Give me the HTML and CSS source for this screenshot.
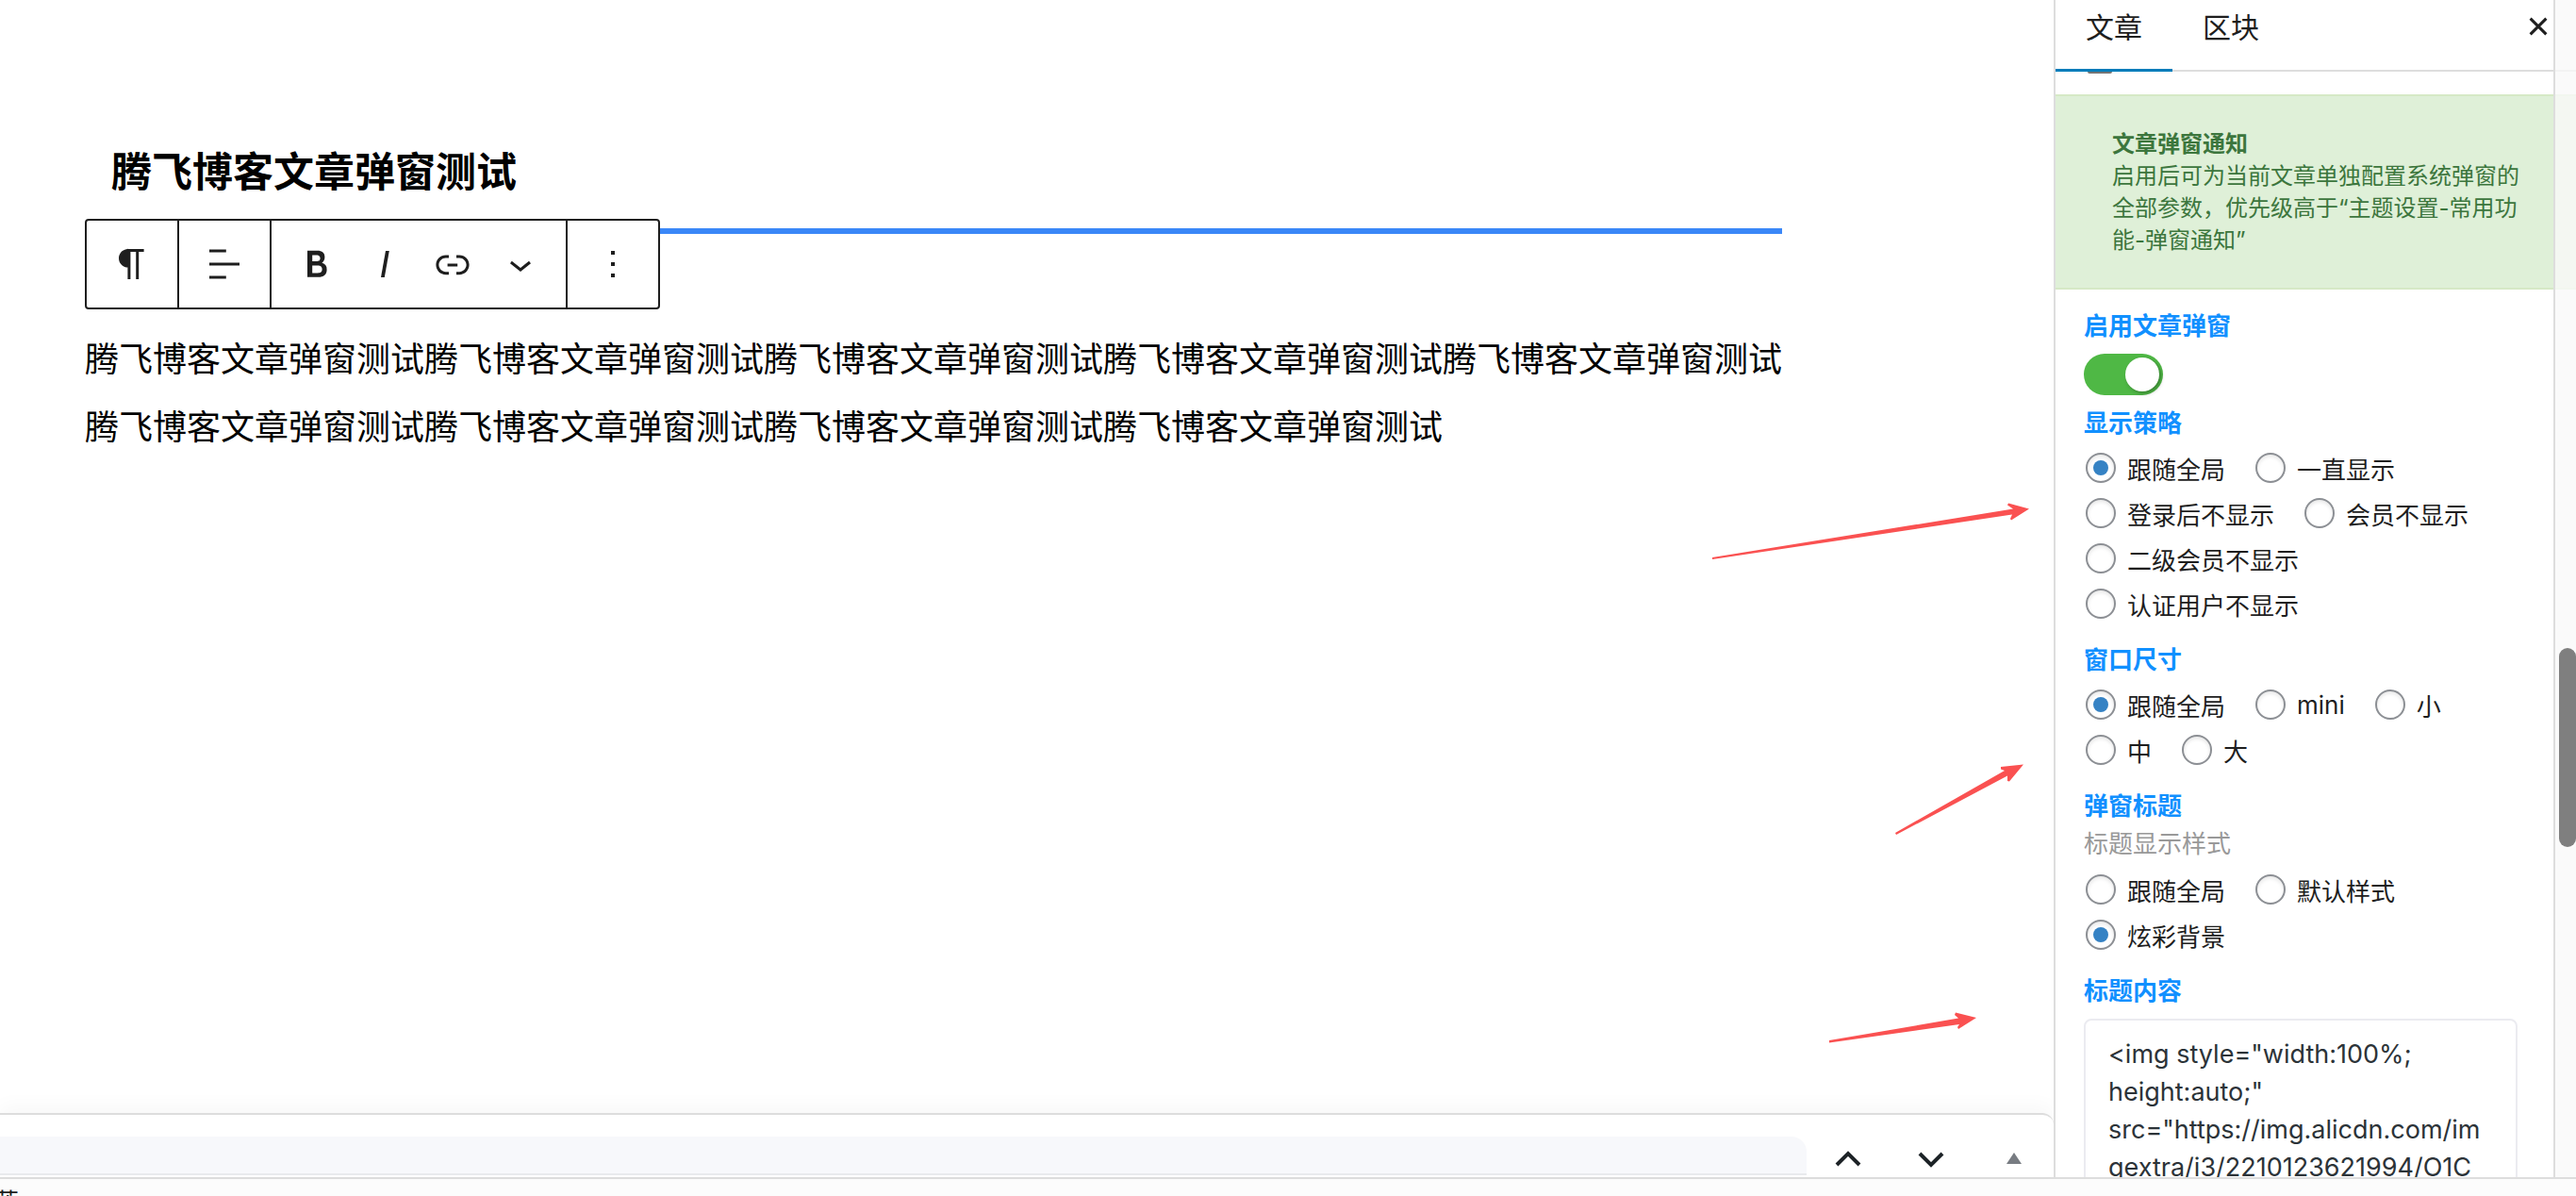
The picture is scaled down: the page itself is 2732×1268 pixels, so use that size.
FILE: index.html
```html
<!DOCTYPE html>
<html lang="zh-CN">
<head>
<meta charset="utf-8">
<title>编辑文章</title>
<link rel="stylesheet" href="styles.css">
</head>
<body>
<div class="app">
  <div class="workspace">
    <main class="main">
      <article class="canvas">
        <h2 class="post-heading">腾飞博客文章弹窗测试</h2>
        <div class="toolbar-row">
          <hr class="heading-rule">
          <div class="toolbar" role="toolbar" aria-label="区块工具">
            <div class="tool-group">
              <button class="tool" aria-label="段落"><svg class="icon" viewBox="0 0 24 24"><path d="M18.3 4H9.9v-.1l-.9.2c-2.3.4-4 2.4-4 4.8s1.7 4.4 4 4.8l.7.1V20h1.5V5.5h2.9V20h1.5V5.5h2.7V4z"/></svg></button>
            </div>
            <div class="tool-group">
              <button class="tool" aria-label="对齐"><svg class="icon" viewBox="0 0 24 24"><path d="M4 19.8h8.9v-1.5H4v1.5zm8.9-15.6H4v1.5h8.9V4.2zm-8.9 7v1.5h16v-1.5H4z"/></svg></button>
            </div>
            <div class="tool-group">
              <button class="tool" aria-label="粗体"><svg class="icon" viewBox="0 0 24 24"><path d="M14.7 11.3c1-.6 1.5-1.6 1.5-3 0-2.3-1.3-3.4-4-3.4H7v14h5.8c1.4 0 2.5-.3 3.3-1 .8-.7 1.2-1.7 1.2-2.9.1-1.9-.8-3.1-2.6-3.7zm-5.1-4h2.3c.6 0 1.1.1 1.4.4.3.3.5.7.5 1.2s-.2 1-.5 1.2c-.3.3-.8.4-1.4.4H9.6V7.3zm4.6 9c-.4.3-1 .4-1.7.4H9.6v-3.9h2.9c.7 0 1.3.2 1.7.5.4.3.6.8.6 1.5s-.2 1.2-.6 1.5z"/></svg></button>
              <button class="tool" aria-label="斜体"><svg class="icon" viewBox="0 0 24 24"><path d="M12.5 5L10 19h1.9l2.5-14z"/></svg></button>
              <button class="tool" aria-label="链接"><svg class="icon" viewBox="0 0 24 24"><path d="M15.6 7.2H14v1.5h1.6c2 0 3.7 1.7 3.7 3.7s-1.7 3.7-3.7 3.7H14v1.5h1.6c2.8 0 5.2-2.3 5.2-5.2 0-2.9-2.3-5.2-5.2-5.2zM4.7 12.4c0-2 1.7-3.7 3.7-3.7H10V7.2H8.4c-2.9 0-5.2 2.3-5.2 5.2 0 2.9 2.3 5.2 5.2 5.2H10v-1.5H8.4c-2 0-3.7-1.7-3.7-3.7zm4.6.9h5.3v-1.5H9.3v1.5z"/></svg></button>
              <button class="tool" aria-label="更多格式"><svg class="icon" viewBox="0 0 24 24"><path d="M17.5 11.6L12 16l-5.5-4.4.9-1.2L12 14l4.5-3.6 1 1.2z"/></svg></button>
            </div>
            <div class="tool-group">
              <button class="tool" aria-label="选项"><svg class="icon" viewBox="0 0 24 24"><path d="M13 19h-2v-2h2v2zm0-6h-2v-2h2v2zm0-6h-2V5h2v2z"/></svg></button>
            </div>
          </div>
        </div>
        <p class="post-text">腾飞博客文章弹窗测试腾飞博客文章弹窗测试腾飞博客文章弹窗测试腾飞博客文章弹窗测试腾飞博客文章弹窗测试腾飞博客文章弹窗测试腾飞博客文章弹窗测试腾飞博客文章弹窗测试腾飞博客文章弹窗测试</p>
      </article>

      <svg class="arrows" viewBox="0 0 368 580" aria-hidden="true">
        <path d="M6 60L325 8.500L319 4.500L320 2.500L342 8.500L323 20.500L322 19L324 14.500L6 62Z"/>
        <path d="M200 352L316 286L312 284.500L312 282L336 279.500L321 297.500L319 297L319 291.500L201 354Z"/>
        <path d="M130 572L267 548.500L263 545L264 542.500L286 548L267 560L266 558L268 555L130 574.500Z"/>
      </svg>

      <section class="metabox">
        <div class="metabox-field"></div>
        <div class="metabox-actions">
          <button class="meta-button" aria-label="上移"><svg class="meta-icon" viewBox="0 0 32 32"><path class="stroke" d="M4 22L16 10L28 22"/></svg></button>
          <button class="meta-button" aria-label="下移"><svg class="meta-icon" viewBox="0 0 32 32"><path class="stroke" d="M4 10L16 22L28 10"/></svg></button>
          <button class="meta-button" aria-label="收起"><svg class="meta-icon" viewBox="0 0 32 32"><path class="triangle" d="M8 21L16 9L24 21Z"/></svg></button>
        </div>
      </section>
    </main>

    <aside class="sidebar">
      <header class="sidebar-header">
        <button class="tab tab-active">文章</button>
        <button class="tab">区块</button>
        <button class="close" aria-label="关闭"><svg class="icon" viewBox="0 0 24 24"><path class="cross" d="M7.800 7.800L16.200 16.200M16.200 7.800L7.800 16.200"/></svg></button>
      </header>
      <div class="checkbox-edge"></div>
      <div class="notice">
        <strong>文章弹窗通知</strong>
        <div>启用后可为当前文章单独配置系统弹窗的全部参数，优先级高于“主题设置-常用功能-弹窗通知”</div>
      </div>
      <form class="settings">
        <div class="field-switch">
          <label class="field-title" for="enable">启用文章弹窗</label>
          <input class="switch" type="checkbox" id="enable" checked>
        </div>
        <fieldset class="field">
          <legend class="field-title">显示策略</legend>
          <div class="options">
            <label class="option"><input class="radio" type="radio" name="policy" checked>跟随全局</label>
            <label class="option"><input class="radio" type="radio" name="policy">一直显示</label>
            <label class="option"><input class="radio" type="radio" name="policy">登录后不显示</label>
            <label class="option"><input class="radio" type="radio" name="policy">会员不显示</label>
            <label class="option"><input class="radio" type="radio" name="policy">二级会员不显示</label>
            <label class="option"><input class="radio" type="radio" name="policy">认证用户不显示</label>
          </div>
        </fieldset>
        <fieldset class="field">
          <legend class="field-title">窗口尺寸</legend>
          <div class="options">
            <label class="option"><input class="radio" type="radio" name="size" checked>跟随全局</label>
            <label class="option"><input class="radio" type="radio" name="size">mini</label>
            <label class="option"><input class="radio" type="radio" name="size">小</label>
            <label class="option"><input class="radio" type="radio" name="size">中</label>
            <label class="option"><input class="radio" type="radio" name="size">大</label>
          </div>
        </fieldset>
        <fieldset class="field">
          <legend class="field-title">弹窗标题</legend>
          <div class="field-hint">标题显示样式</div>
          <div class="options">
            <label class="option"><input class="radio" type="radio" name="title-style">跟随全局</label>
            <label class="option"><input class="radio" type="radio" name="title-style">默认样式</label>
            <label class="option"><input class="radio" type="radio" name="title-style" checked>炫彩背景</label>
          </div>
        </fieldset>
        <div class="field">
          <label class="field-title" for="title-content">标题内容</label>
          <textarea class="content-box" id="title-content" spellcheck="false">&lt;img style="width:100%; height:auto;" src="https://img.alicdn.com/imgextra/i3/2210123621994/O1C</textarea>
        </div>
      </form>
      <div class="scroll-track"><div class="scroll-thumb"></div></div>
    </aside>
  </div>
  <footer class="breadcrumb"><span class="crumb">段落</span></footer>
</div>
</body>
</html>
```
FILE: styles.css
```css
* {
  box-sizing: border-box;
}

body {
  margin: 0;
  background: #fff;
  color: #1e1e1e;
  font-family: Inter, "Noto Sans CJK SC", sans-serif;
  font-size: 26px;
}

button {
  margin: 0;
  padding: 0;
  border: 0;
  background: none;
  color: inherit;
  font: inherit;
}

.app {
  display: flex;
  flex-direction: column;
  height: 100vh;
  overflow: hidden;
}

.workspace {
  display: flex;
  flex: 1;
  min-height: 0;
}

.icon {
  display: block;
  width: 48px;
  height: 48px;
  fill: #1e1e1e;
}

/* Editor canvas */
.main {
  position: relative;
  display: flex;
  flex: 1;
  flex-direction: column;
  min-width: 0;
}

.canvas {
  flex: 1;
  min-height: 0;
  padding: 146px 288px 0 90px;
  color: #000;
}

.post-heading {
  margin: 0 0 14px;
  padding-left: 28px;
  font-size: 43px;
  font-weight: 700;
  line-height: 72px;
}

.toolbar-row {
  display: grid;
  justify-items: start;
}

.toolbar-row > * {
  grid-area: 1 / 1;
}

.heading-rule {
  width: 100%;
  height: 6px;
  margin: 10px 0 0;
  border: 0;
  background: #3a87f7;
}

.toolbar {
  display: flex;
  z-index: 1;
  height: 96px;
  border: 2px solid #1e1e1e;
  border-radius: 4px;
  background: #fff;
}

.tool-group {
  display: flex;
  padding: 0 12px;
  border-left: 2px solid #1e1e1e;
}

.tool-group:first-child {
  border-left: 0;
}

.tool {
  display: grid;
  place-items: center;
  width: 72px;
}

.post-text {
  margin: 17px 0 0;
  font-size: 36px;
  line-height: 72px;
}

.arrows {
  position: absolute;
  top: 531px;
  right: 0;
  width: 368px;
  height: 580px;
  fill: #fa5151;
}

/* Meta box strip under the canvas */
.metabox {
  display: flex;
  gap: 22px;
  height: 68px;
  padding: 23px 0 2px;
  border-top: 2px solid #ddd;
  border-radius: 0 12px 0 0;
  box-shadow: 0 -8px 20px rgba(0, 0, 0, 0.03);
}

.metabox-field {
  flex: 1;
  border-bottom: 2px solid #e8eaed;
  border-radius: 0 16px 0 0;
  background: #f7f8fb;
}

.metabox-actions {
  display: flex;
  width: 240px;
}

.meta-button {
  display: grid;
  flex: none;
  align-content: center;
  justify-content: start;
  width: 88px;
  padding: 6px 0 0 6px;
}

.meta-button:last-child {
  width: 64px;
}

.meta-icon {
  display: block;
  width: 32px;
  height: 32px;
}

.stroke {
  fill: none;
  stroke: #1d2327;
  stroke-width: 4;
}

.triangle {
  fill: #787c82;
}

.cross {
  fill: none;
  stroke: #1e1e1e;
  stroke-width: 1.5;
}

/* Settings sidebar */
.sidebar {
  position: relative;
  flex: none;
  width: 554px;
  overflow: hidden;
  border-left: 2px solid #ddd;
  background: #fff;
}

.sidebar-header {
  display: flex;
  height: 76px;
  padding-right: 16px;
  border-bottom: 2px solid #ddd;
}

.tab {
  height: 76px;
  padding: 0 32px 23px;
  font-size: 30px;
}

.tab-active {
  border-bottom: 3px solid #007cba;
  padding-bottom: 20px;
}

.close {
  height: 56px;
  margin-left: auto;
}

.checkbox-edge {
  width: 26px;
  height: 2px;
  margin: 0 0 22px 34px;
  border-radius: 0 0 4px 4px;
  background: #757575;
}

.notice {
  padding: 34px 58px 33px 60px;
  border: solid #d6e9c6;
  border-width: 2px 0;
  background: #dff0d8;
  color: #3c763d;
  font-size: 24px;
  line-height: 34px;
}

.settings {
  padding: 21px 62px 0 30px;
}

.field-title {
  display: block;
  padding: 0;
  color: #1190ff;
  font-weight: 600;
  line-height: 36px;
}

.field-switch {
  margin-bottom: 12px;
}

.field {
  min-width: 0;
  margin: 0 0 18px;
  padding: 0;
  border: 0;
}

.field-hint {
  margin: 4px 0 1px;
  color: #999;
  line-height: 36px;
}

.switch {
  display: block;
  width: 84px;
  height: 44px;
  margin: 11px 0 0;
  border-radius: 22px;
  appearance: none;
  background: #4fb845;
}

.switch::before {
  display: block;
  width: 36px;
  height: 36px;
  margin: 4px 4px 0 auto;
  border-radius: 50%;
  background: #fff;
  box-shadow: 2px 2px 4px rgba(0, 0, 0, 0.3);
  content: "";
}

.options {
  display: flex;
  flex-wrap: wrap;
  gap: 0 32px;
  padding: 5px 0 0 2px;
}

.option {
  display: flex;
  align-items: center;
  gap: 12px;
  height: 48px;
}

.radio {
  display: grid;
  place-items: center;
  width: 32px;
  height: 32px;
  margin: 0;
  border: 2px solid #8c8f94;
  border-radius: 50%;
  appearance: none;
  background: #fff;
  box-shadow: inset 0 2px 4px rgba(0, 0, 0, 0.1);
}

.radio:checked::before {
  width: 16px;
  height: 16px;
  border-radius: 50%;
  background: #3582c4;
  content: "";
}

.content-box {
  display: block;
  width: 100%;
  height: 400px;
  margin-top: 11px;
  padding: 16px 30px 16px 24px;
  overflow: hidden;
  border: 2px solid #ebebf0;
  border-radius: 8px;
  color: #2c3338;
  font-family: Inter, "Noto Sans CJK SC", sans-serif;
  font-size: 27px;
  line-height: 40px;
  resize: none;
}

.scroll-track {
  position: absolute;
  top: 0;
  right: 0;
  bottom: 0;
  width: 24px;
  padding-left: 4px;
  border-left: 2px solid #ddd;
  background: rgba(249, 249, 249, 0.8);
}

.scroll-thumb {
  height: 211px;
  margin-top: 687px;
  border-radius: 10px;
  background: #7f7f7f;
}

/* Status bar */
.breadcrumb {
  flex: none;
  height: 20px;
  overflow: hidden;
  border-top: 2px solid #ddd;
  background: #fcfcfc;
}

.crumb {
  display: block;
  margin-left: -32px;
  padding-top: 5px;
  line-height: 40px;
}
```
